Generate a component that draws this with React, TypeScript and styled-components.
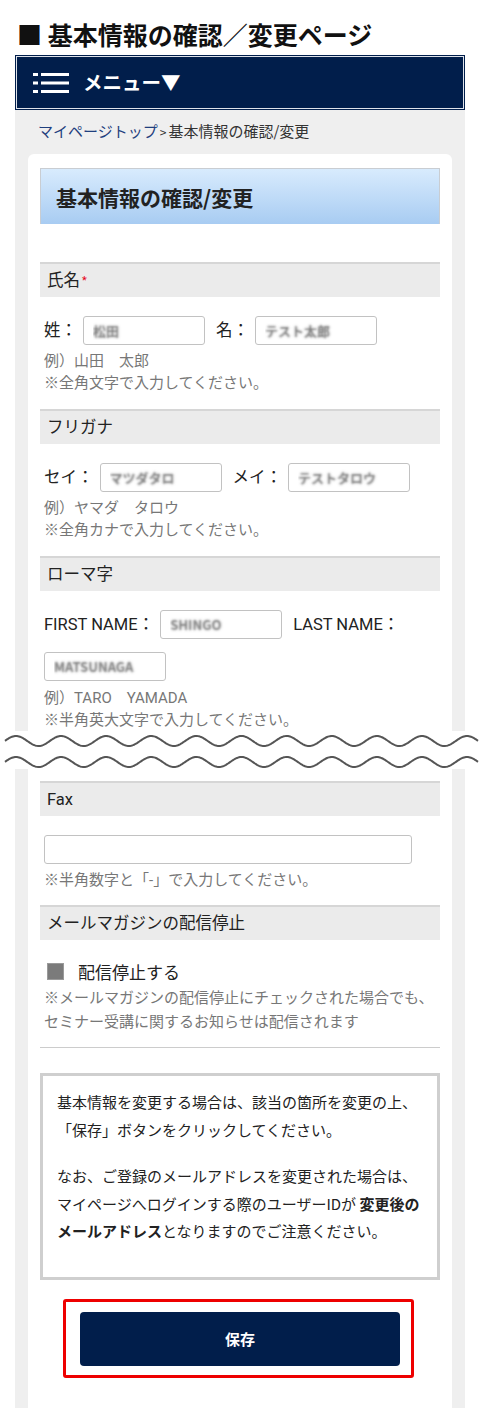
import React from "react";
import styled, { createGlobalStyle } from "styled-components";

const NAVY = "#011e4b";

const GlobalStyle = createGlobalStyle`
  html, body { margin: 0; padding: 0; background: #fff; }
  body {
    font-family: Roboto, "Noto Sans CJK JP", "Noto Sans", sans-serif;
    color: #222;
  }
  * { box-sizing: border-box; }
`;

const Page = styled.div`
  width: 480px;
  padding-bottom: 20px;
`;

const Title = styled.h1`
  margin: 0 0 4px;
  padding: 17px 0 0 17px;
  font-family: "Noto Sans CJK JP", sans-serif;
  font-size: 25px;
  font-weight: 700;
  line-height: 34px;
  color: #111;
`;

const MenuBar = styled.div`
  margin: 0 15px;
  height: 55px;
  background: ${NAVY};
  border: 1px solid ${NAVY};
  box-shadow: inset 0 0 0 1px #dfe3ea;
  display: flex;
  align-items: center;
  gap: 14px;
  padding-left: 17px;
  color: #fff;
  font-family: "Noto Sans CJK JP", sans-serif;
  font-size: 19.5px;
  font-weight: 700;
`;

const MenuText = styled.span`
  line-height: 1;
  padding-bottom: 1px;
`;

const Panel = styled.div`
  margin: 0 15px;
  background: #efefef;
  padding: 0 13px;
`;

const Breadcrumb = styled.div`
  height: 44px;
  padding: 11px 0 0 10px;
  font-size: 15px;
  line-height: 20px;
  color: #333;
  font-family: "Noto Sans CJK JP", sans-serif;
`;

const Crumb = styled.a`
  color: #1f3f7e;
  text-decoration: none;
`;

const Sep = styled.span`
  font-size: 12px;
  margin: 0 2px;
  color: #333;
`;

const Card = styled.div<{ $top?: boolean }>`
  background: #fff;
  border-radius: ${(p) => (p.$top ? "6px 6px 0 0" : "0")};
  padding: ${(p) => (p.$top ? "14px 12px 0" : "12px 12px 30px")};
  overflow: hidden;
`;

const PageHeading = styled.h2`
  margin: 0 0 38px;
  height: 56px;
  border: 1px solid #c9cdd2;
  border-bottom: none;
  background: linear-gradient(#d8ebfd, #a8ccf2);
  padding-left: 15px;
  display: flex;
  align-items: center;
  font-family: "Noto Sans CJK JP", sans-serif;
  font-size: 21px;
  font-weight: 700;
  color: #222;
`;

const SectionHeader = styled.div`
  height: 35px;
  border-top: 2px solid #d6d6d6;
  background: #ebebeb;
  padding-left: 7px;
  font-size: 16.5px;
  line-height: 33px;
  color: #222;
`;

const Required = styled.span`
  color: #e60012;
  font-size: 11px;
  margin-left: 2px;
  vertical-align: 2px;
`;

const SectionBody = styled.div<{ $bottom?: number }>`
  padding: 19px 4px ${(p) => (p.$bottom ?? 15)}px;
`;

const InputRow = styled.div`
  display: flex;
  flex-wrap: wrap;
  align-items: center;
  row-gap: 13px;
`;

const Field = styled.label`
  display: flex;
  align-items: center;
  margin-right: 11px;
`;

const FieldLabel = styled.span`
  font-size: 16.5px;
  line-height: 29px;
  margin-right: 6px;
  color: #222;
  white-space: nowrap;
`;

const TextInput = styled.input<{ $wide?: boolean }>`
  width: ${(p) => (p.$wide ? "368px" : "122px")};
  height: 29px;
  border: 1px solid #c2c2c2;
  border-radius: 3px;
  padding: 0 9px;
  font-family: "Noto Sans CJK JP", sans-serif;
  font-size: 13px;
  font-weight: 700;
  color: transparent;
  text-shadow: 0 0 2.5px rgba(70, 70, 70, 0.75);
  background: #fff;
  outline: none;
`;

const Hint = styled.div<{ $lh?: number; $mt?: number }>`
  margin-top: ${(p) => p.$mt ?? 5}px;
  font-size: 15px;
  line-height: ${(p) => p.$lh ?? 22}px;
  color: #777;
  white-space: nowrap;
`;

const CheckRow = styled.label`
  display: flex;
  align-items: center;
  height: 24px;
`;

const CheckBox = styled.span`
  width: 17px;
  height: 17px;
  margin: 0 14px 0 3px;
  background: #7b7b7b;
  border: 1px solid #9a9a9a;
`;

const CheckLabel = styled.span`
  font-size: 17px;
  color: #222;
`;

const Divider = styled.hr`
  margin: 0 0 25px;
  border: 0;
  border-top: 1px solid #cccccc;
`;

const InfoBox = styled.div`
  border: 3px solid #cfcfcf;
  padding: 12px 8px 32px 14px;
  font-family: "Noto Sans CJK JP", sans-serif;
  font-size: 15px;
  line-height: 27.5px;
  color: #222;
  white-space: nowrap;
`;

const InfoPara = styled.p<{ $gap?: boolean }>`
  margin: ${(p) => (p.$gap ? "19px 0 0" : "0")};
`;

const Strong = styled.strong`
  font-weight: 700;
`;

const SaveFrame = styled.div`
  margin: 19px 0 0 23px;
  width: 351px;
  border: 3px solid #ee0000;
  border-radius: 3px;
  padding: 10px 11px 9px 14px;
`;

const SaveButton = styled.button`
  display: block;
  width: 100%;
  height: 54px;
  border: none;
  border-radius: 4px;
  background: ${NAVY};
  color: #fff;
  font-family: "Noto Sans CJK JP", sans-serif;
  font-size: 15px;
  font-weight: 700;
`;

const Break = styled.div`
  height: 38px;
  background: #fff;
  svg {
    display: block;
  }
`;

const Hamburger = () => (
  <svg width="36" height="21" viewBox="0 0 36 21" aria-hidden="true">
    {[1, 9.5, 18].map((y) => (
      <g key={y} fill="#fff">
        <rect x="0" y={y} width="5" height="3" />
        <rect x="8" y={y} width="28" height="3" />
      </g>
    ))}
  </svg>
);

function wavePath(cy: number) {
  const pts: string[] = [];
  for (let x = 5; x <= 478; x += 1) {
    const y = cy - 5 * Math.cos((2 * Math.PI * (x - 16)) / 45.1);
    pts.push(`${x === 5 ? "M" : "L"}${x},${y.toFixed(2)}`);
  }
  return pts.join(" ");
}

const WaveBreak = () => (
  <Break>
    <svg width="480" height="38" viewBox="0 0 480 38" aria-hidden="true">
      <path d={wavePath(10)} fill="none" stroke="#555" strokeWidth="2" />
      <path d={wavePath(31)} fill="none" stroke="#555" strokeWidth="2" />
    </svg>
  </Break>
);

export default function App() {
  return (
    <Page>
      <GlobalStyle />
      <Title>■ 基本情報の確認／変更ページ</Title>
      <MenuBar>
        <Hamburger />
        <MenuText>メニュー▼</MenuText>
      </MenuBar>

      <Panel>
        <Breadcrumb>
          <Crumb href="#">マイページトップ</Crumb>
          <Sep>&gt;</Sep>基本情報の確認/変更
        </Breadcrumb>
        <Card $top>
          <PageHeading>基本情報の確認/変更</PageHeading>

          <SectionHeader>
            氏名<Required>*</Required>
          </SectionHeader>
          <SectionBody>
            <InputRow>
              <Field>
                <FieldLabel>姓：</FieldLabel>
                <TextInput defaultValue="松田" />
              </Field>
              <Field>
                <FieldLabel>名：</FieldLabel>
                <TextInput defaultValue="テスト太郎" />
              </Field>
            </InputRow>
            <Hint>
              例）山田　太郎
              <br />
              ※全角文字で入力してください。
            </Hint>
          </SectionBody>

          <SectionHeader>フリガナ</SectionHeader>
          <SectionBody>
            <InputRow>
              <Field>
                <FieldLabel>セイ：</FieldLabel>
                <TextInput defaultValue="マツダタロ" />
              </Field>
              <Field>
                <FieldLabel>メイ：</FieldLabel>
                <TextInput defaultValue="テストタロウ" />
              </Field>
            </InputRow>
            <Hint>
              例）ヤマダ　タロウ
              <br />
              ※全角カナで入力してください。
            </Hint>
          </SectionBody>

          <SectionHeader>ローマ字</SectionHeader>
          <SectionBody $bottom={0}>
            <InputRow>
              <Field>
                <FieldLabel>FIRST NAME：</FieldLabel>
                <TextInput defaultValue="SHINGO" />
              </Field>
              <Field>
                <FieldLabel>LAST NAME：</FieldLabel>
              </Field>
              <Field>
                <TextInput defaultValue="MATSUNAGA" />
              </Field>
            </InputRow>
            <Hint $mt={6}>
              例）TARO　YAMADA
              <br />
              ※半角英大文字で入力してください。
            </Hint>
          </SectionBody>
        </Card>
      </Panel>

      <WaveBreak />

      <Panel>
        <Card>
          <SectionHeader>Fax</SectionHeader>
          <SectionBody $bottom={14}>
            <TextInput $wide />
            <Hint>※半角数字と「-」で入力してください。</Hint>
          </SectionBody>

          <SectionHeader>メールマガジンの配信停止</SectionHeader>
          <SectionBody $bottom={13}>
            <CheckRow>
              <CheckBox />
              <CheckLabel>配信停止する</CheckLabel>
            </CheckRow>
            <Hint $lh={24} $mt={3}>
              ※メールマガジンの配信停止にチェックされた場合でも、
              <br />
              セミナー受講に関するお知らせは配信されます
            </Hint>
          </SectionBody>
          <Divider />

          <InfoBox>
            <InfoPara>
              基本情報を変更する場合は、該当の箇所を変更の上、
              <br />
              「保存」ボタンをクリックしてください。
            </InfoPara>
            <InfoPara $gap>
              なお、ご登録のメールアドレスを変更された場合は、
              <br />
              マイページへログインする際のユーザーIDが <Strong>変更後の</Strong>
              <br />
              <Strong>メールアドレス</Strong>となりますのでご注意ください。
            </InfoPara>
          </InfoBox>

          <SaveFrame>
            <SaveButton type="button">保存</SaveButton>
          </SaveFrame>
        </Card>
      </Panel>
    </Page>
  );
}
